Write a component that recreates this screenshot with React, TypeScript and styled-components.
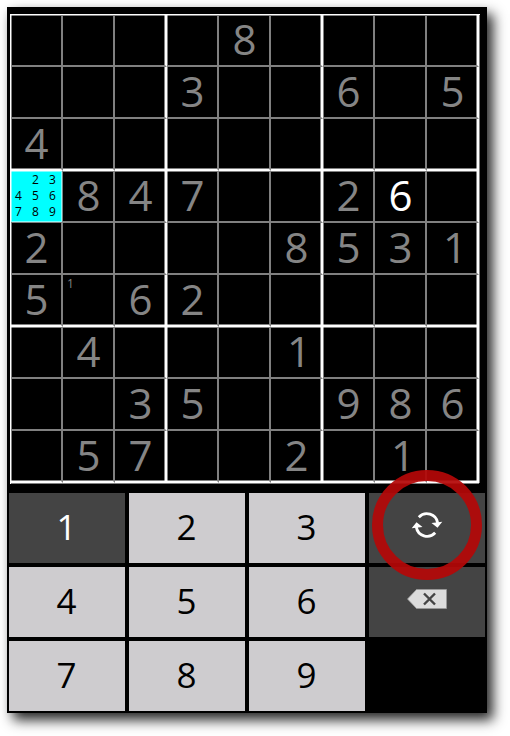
import React from "react";
import styled, { createGlobalStyle, css } from "styled-components";

const GlobalStyle = createGlobalStyle`
  body { margin: 0; background: #fff; overflow: hidden; }
  * { box-sizing: border-box; }
`;

const Page = styled.main`
  width: 510px;
  height: 736px;
  padding: 7px;
  font-family: "Open Sans", "Noto Sans", sans-serif;
`;

const Device = styled.section`
  width: 480px;
  height: 706px;
  padding: 7px 2px 2px 3px;
  background: #000;
  box-shadow: 6px 7px 12px rgba(0, 0, 0, 0.85), 0 0 6px rgba(0, 0, 0, 0.04);
`;

const Board = styled.div`
  width: 470px;
  height: 470px;
  border: solid #fff;
  border-width: 1px 0 0 1px;
  display: grid;
  grid-template-columns: repeat(9, 52px);
  grid-template-rows: repeat(9, 52px);
`;

const LINE = "rgba(255, 255, 255, 0.5)";

const edgeShadows = (col: number, row: number) => {
  const edges: string[] = [];
  if (col % 3 === 0) edges.push(`inset 1px 0 ${LINE}`);
  if (col % 3 === 2) edges.push(`inset -1px 0 ${LINE}`);
  if (row % 3 === 0) edges.push(`inset 0 1px ${LINE}`);
  if (row % 3 === 2) edges.push(`inset 0 -1px ${LINE}`);
  if (col === 8) edges.push("1px 0 #808080");
  if (row === 8) edges.push("0 1px #808080");
  return edges.length ? edges.join(", ") : "none";
};

const Cell = styled.div<{ $col: number; $row: number; $selected: boolean }>`
  border: solid;
  border-width: 0 2px 2px 0;
  border-right-color: ${p => (p.$col % 3 === 2 ? "#fff" : LINE)};
  border-bottom-color: ${p => (p.$row % 3 === 2 ? "#fff" : LINE)};
  box-shadow: ${p => edgeShadows(p.$col, p.$row)};
  display: flex;
  align-items: center;
  justify-content: center;
  ${p => p.$selected && css`
    background: linear-gradient(#0ff, #0ff) 0 0 / 51px 51px no-repeat border-box;
  `}
`;

const Digit = styled.span<{ $own: boolean; $nudge: number }>`
  color: ${p => (p.$own ? "#fff" : "#858585")};
  font-size: 42px;
  line-height: 50px;
  padding: 0 0 2px ${p => p.$nudge}px;
`;

const Notes = styled.div<{ $dark: boolean }>`
  width: 50px;
  height: 50px;
  padding-top: 1px;
  display: grid;
  grid-template: repeat(3, 16px) / repeat(3, 17px);
  color: ${p => (p.$dark ? "#000" : "#808080")};
  font-size: 12px;
  line-height: 16px;
  text-align: center;
`;

const Note = styled.span`
  padding-right: 2px;
`;

const Keypad = styled.div`
  margin: 9px 0 0 -1px;
  display: grid;
  grid-template: repeat(3, 70px) / repeat(4, 116px);
  gap: 4px;
`;

const Key = styled.button<{ $dark?: boolean }>`
  border: 0;
  padding: 0 1px 2px 0;
  display: flex;
  align-items: center;
  justify-content: center;
  font: 35px/68px "Open Sans", "Noto Sans", sans-serif;
  color: ${p => (p.$dark ? "#fff" : "#000")};
  background: ${p => (p.$dark ? "#444" : "#cecccf")};
  position: relative;
`;

const IconKey = styled(Key)`
  padding: 0 0 6px;
`;

const Highlight = styled.div`
  position: absolute;
  left: 3px;
  top: -23px;
  width: 110px;
  height: 110px;
  border: 11px solid rgba(180, 8, 8, 0.93);
  border-radius: 50%;
  z-index: 1;
`;

const puzzle = [
  "....8....",
  "...3..6.5",
  "4........",
  ".847..26.",
  "2....8531",
  "5.62.....",
  ".4...1...",
  "..35..986",
  ".57..2.1.",
];

const notes: Record<string, string> = { "3-0": "23456789", "5-1": "1" };

const SyncIcon = () => (
  <svg width="32" height="26" viewBox="0 0 32 26" fill="none">
    <path d="M7.8 5.2A11 11 0 0 1 26.7 11" stroke="#fff" strokeWidth="2.8" />
    <path d="M24.2 20.8A11 11 0 0 1 5.3 15" stroke="#fff" strokeWidth="2.8" />
    <path d="M20.5 11 31.3 9.8 26.5 15.8Z M.7 16.2 5.5 10.2 11.5 15Z" fill="#fff" />
  </svg>
);

const EraseIcon = () => (
  <svg width="40" height="20" viewBox="0 0 40 20">
    <path d="M.5 10 9.5.5H39.5V19.5H9.5Z" fill="#dcdcdc" stroke="#999" strokeWidth=".8" />
    <path d="m17 4.5 11 11m0-11-11 11" stroke="#444" strokeWidth="2.4" />
  </svg>
);

const NumberKey = ({ n }: { n: number }) => <Key $dark={n === 1}>{n}</Key>;

export default function App() {
  return (
    <Page>
      <GlobalStyle />
      <Device>
        <Board>
          {puzzle.flatMap((line, row) =>
            [...line].map((value, col) => {
              const id = `${row}-${col}`;
              const selected = id === "3-0";
              return (
                <Cell key={id} $col={col} $row={row} $selected={selected}>
                  {notes[id] && (
                    <Notes $dark={selected}>
                      {[..."123456789"].map(n => (
                        <Note key={n}>{notes[id].includes(n) ? n : ""}</Note>
                      ))}
                    </Notes>
                  )}
                  {value !== "." && (
                    <Digit $own={id === "3-7"} $nudge={value === "1" ? 6 : 1}>{value}</Digit>
                  )}
                </Cell>
              );
            })
          )}
        </Board>
        <Keypad>
          {[1, 2, 3].map(n => <NumberKey key={n} n={n} />)}
          <IconKey $dark aria-label="Switch input mode">
            <SyncIcon />
            <Highlight />
          </IconKey>
          {[4, 5, 6].map(n => <NumberKey key={n} n={n} />)}
          <IconKey $dark aria-label="Erase"><EraseIcon /></IconKey>
          {[7, 8, 9].map(n => <NumberKey key={n} n={n} />)}
        </Keypad>
      </Device>
    </Page>
  );
}
